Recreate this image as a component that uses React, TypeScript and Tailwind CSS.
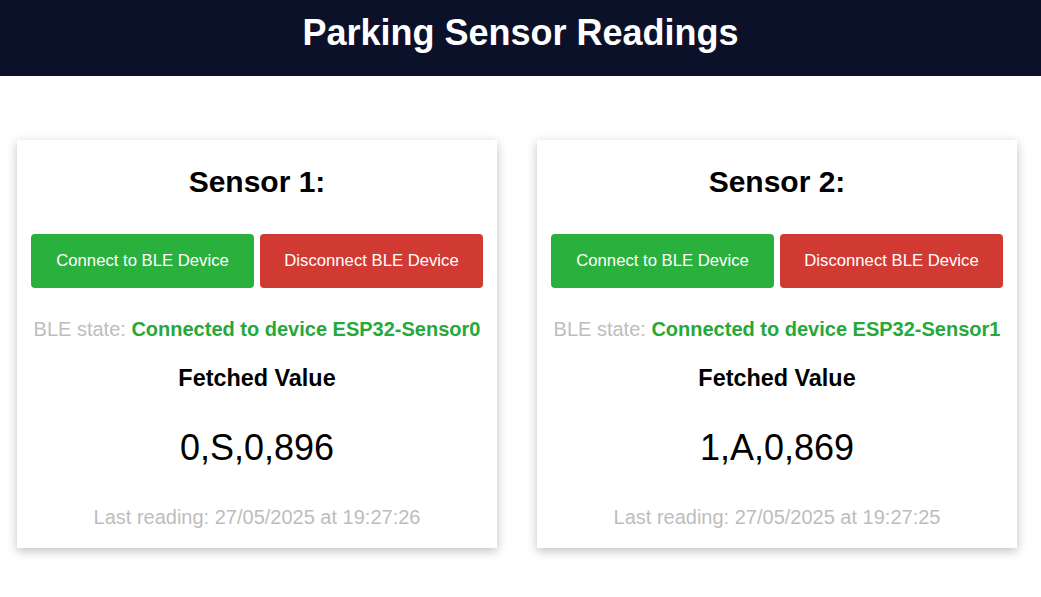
const sensors = [
  { name: "Sensor 1:", device: "ESP32-Sensor0", value: "0,S,0,896", time: "27/05/2025 at 19:27:26" },
  { name: "Sensor 2:", device: "ESP32-Sensor1", value: "1,A,0,869", time: "27/05/2025 at 19:27:25" },
];

function SensorCard({ s }: { s: (typeof sensors)[number] }) {
  return (
    <div className="w-[480px] h-[408px] bg-white shadow-[0_3px_10px_rgba(0,0,0,0.25)] px-[14px] flex flex-col items-center">
      <h2 className="mt-[25px] text-[30px] font-bold leading-[34px] text-black">{s.name}</h2>
      <div className="mt-[35px] flex w-full gap-[6px]">
        <button className="flex-1 h-[54px] rounded-[4px] bg-[#29b03d] text-white text-[16.7px]">
          Connect to BLE Device
        </button>
        <button className="flex-1 h-[54px] rounded-[4px] bg-[#d13a33] text-white text-[16.7px]">
          Disconnect BLE Device
        </button>
      </div>
      <p className="mt-[29px] text-[20px] leading-[24px] text-[#bdbdbd] whitespace-nowrap">
        BLE state: <span className="font-bold text-[#26a83a]">Connected to device {s.device}</span>
      </p>
      <h3 className="mt-[24px] text-[23.4px] font-bold leading-[26px] text-black">Fetched Value</h3>
      <p className="mt-[36px] text-[36px] leading-[42px] text-black">{s.value}</p>
      <p className="mt-[36px] text-[20px] leading-[24px] text-[#bdbdbd]">Last reading: {s.time}</p>
    </div>
  );
}

export default function App() {
  return (
    <div className="min-h-[597px] bg-white font-[family-name:'Liberation_Sans',Arial,sans-serif]">
      <header className="bg-[#0b1129] h-[76px] flex items-center justify-center">
        <h1 className="text-white text-[36px] font-bold leading-none -mt-[10px]">Parking Sensor Readings</h1>
      </header>
      <main className="pt-[64px] pl-[17px] flex gap-[40px]">
        {sensors.map((s) => (
          <SensorCard key={s.name} s={s} />
        ))}
      </main>
    </div>
  );
}
